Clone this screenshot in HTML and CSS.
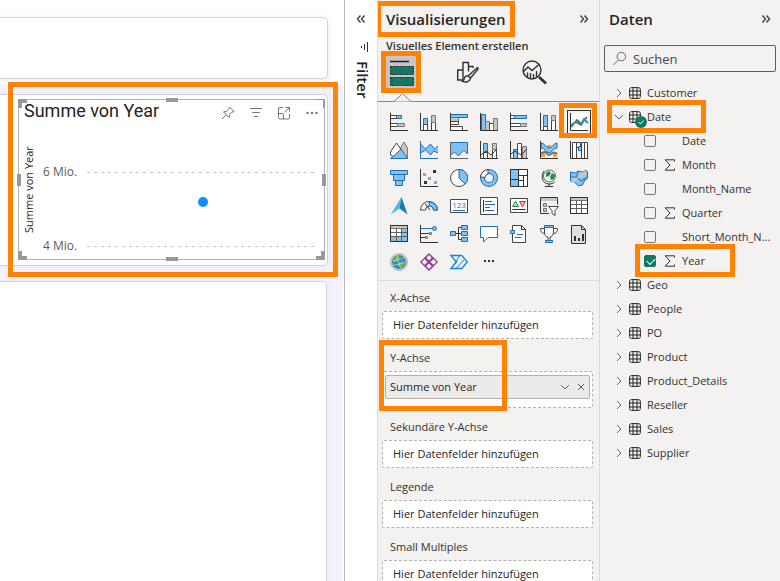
FILE: index.html
```html
<!DOCTYPE html>
<html lang="de">
<head>
<meta charset="utf-8">
<meta name="viewport" content="width=device-width, initial-scale=1">
<title>Berichtseditor</title>
<link rel="stylesheet" href="styles.css">
</head>
<body>
<svg class="defs" aria-hidden="true">
  <symbol id="table" viewBox="0 0 12 12"><rect x=".6" y=".6" width="10.8" height="10.8" rx="2"/><path d="M4 .6v10.8M8 .6v10.8M.6 4h10.8M.6 8h10.8"/></symbol>
  <symbol id="right" viewBox="0 0 12 12"><path d="M4 2l4 4-4 4"/></symbol>
  <symbol id="down" viewBox="0 0 12 12"><path d="M2 4l4 4 4-4"/></symbol>
  <symbol id="sigma" viewBox="0 0 12 12"><path d="M10.5 2.5V.8H1.200L6 6l-4.800 5.200h9.300V9.500"/></symbol>
</svg>
<div class="app">
  <main class="canvas">
    <div class="page-top"><div class="card"></div></div>
    <div class="page-body">
      <section class="card visual marked">
        <div class="frame"><i class="corner tl"></i><i class="corner tr"></i><i class="corner bl"></i><i class="corner br"></i><i class="grip t"></i><i class="grip b"></i><i class="grip l"></i><i class="grip r"></i></div>
        <header class="visual-head">
          <h1>Summe von Year</h1>
          <div class="visual-tools">
            <button aria-label="Anheften"><svg viewBox="0 0 14 14"><path d="M8.500 1l4.500 4.500-2 .7-2.400 2.400-.5 2.900-5.600-5.600 2.900-.5L7.800 3zM5.200 8.800L1 13"/></svg></button>
            <button aria-label="Filter"><svg viewBox="0 0 14 14"><path d="M1 2.500h12M3 6.500h8M5 10.500h4"/></svg></button>
            <button aria-label="Fokusmodus"><svg viewBox="0 0 14 14"><path d="M6 1.500H3a1.500 1.500 0 00-1.500 1.500v8.500A1.500 1.500 0 003 13h8a1.500 1.500 0 001.500-1.500V8M8.500 1.500h4v4M12.500 1.500L7.500 6.500M1.500 7.500H5A1.500 1.500 0 016.500 9v4"/></svg></button>
            <button aria-label="Weitere Optionen"><svg class="dots" viewBox="0 0 14 14"><circle cx="2.500" cy="7" r="1.200"/><circle cx="7" cy="7" r="1.200"/><circle cx="11.500" cy="7" r="1.200"/></svg></button>
          </div>
        </header>
        <div class="plot">
          <span class="axis-title">Summe von Year</span>
          <div class="lines">
            <div class="tick"><span>6 Mio.</span><i></i></div>
            <div class="tick"><span>4 Mio.</span><i></i></div>
            <b class="point"></b>
          </div>
        </div>
      </section>
      <div class="card tall"></div>
    </div>
  </main>

  <aside class="filter-pane">
    <button class="expand" aria-label="Filter erweitern"><svg viewBox="0 0 10 10"><path d="M4.500 1.500L1.500 5l3 3.500M8.500 1.500L5.500 5l3 3.500"/></svg></button>
    <svg class="filter-icon" viewBox="0 0 10 10"><path d="M8.500 0v10M5.500 2v6M2.500 4v2"/></svg>
    <h2>Filter</h2>
  </aside>

  <section class="viz-pane">
    <header class="pane-head">
      <h2 class="marked">Visualisierungen</h2>
      <button class="expand" aria-label="Reduzieren"><svg viewBox="0 0 10 10"><path d="M1.500 1.500l3 3.500-3 3.500M5.500 1.500l3 3.500-3 3.500"/></svg></button>
    </header>
    <h3>Visuelles Element erstellen</h3>
    <nav class="tabs">
      <button class="tab selected marked" aria-label="Visual erstellen"><svg viewBox="0 0 30 32"><path d="M4 5.500h19" stroke="#201f1e" stroke-width="1.500"/><g fill="#117865" stroke="#201f1e" stroke-dasharray="2 1"><rect x="4.500" y="10.500" width="23" height="8"/><rect x="4.500" y="21.500" width="23" height="8"/></g></svg></button>
      <button class="tab" aria-label="Visual formatieren"><svg viewBox="0 0 24 26" fill="none" stroke="#484644" stroke-width="1.400"><path d="M9 21H1.700V11H7V3.500h5.500v9M7 11v9M12.500 7.500H17V9"/><path d="M21.500 8.500c1 .6.500 1.500 0 2.200L14.500 19l-2.500-2zM12 17c-2.500-.4-3.500 1-3.800 3-.2 1.300-1 2-1.800 2.300 3 1.500 7.500.7 8.100-3.300z" fill="#f3f2f1"/></svg></button>
      <button class="tab" aria-label="Analyse"><svg viewBox="0 0 26 26" fill="none" stroke="#323130" stroke-width="1.400"><circle cx="11" cy="11" r="9"/><path d="M2 13l5-5 4 3.500L18.500 5M6.500 18v-4.500M9.500 19.500V14M12.500 19.500V15M15.500 18v-6"/><path d="M18 18l7 6.500" stroke-width="2.800"/></svg></button>
    </nav>
    <svg class="pointer" viewBox="0 0 17 9"><path d="M0 8.500L8.500.7 17 8.500"/></svg>

    <div class="gallery">
      <button aria-label="Gestapeltes Balkendiagramm"><svg viewBox="0 0 18 18"><path class="b" d="M6.500 2.500h5v3h-5z"/><path class="w" d="M.5 2.500h6v3h-6zM.5 10.500h7v3h-7z"/><path class="g" d="M7.500 10.500h7v3h-7z"/><path class="k" d="M.5 0v17.500H18"/></svg></button>
      <button aria-label="Gestapeltes Säulendiagramm"><svg viewBox="0 0 18 18"><path class="b" d="M3.500 5.500h4v6h-4z"/><path class="w" d="M3.500 11.500h4v6h-4zM11.500 9.500h4v8h-4z"/><path class="g" d="M11.500 2.500h4v7h-4z"/><path class="k" d="M.5 0v17.500H18"/></svg></button>
      <button aria-label="Gruppiertes Balkendiagramm"><svg viewBox="0 0 18 18"><path class="b" d="M.5 1.500h17v3H.5z"/><path class="g" d="M.5 4.500h8v4h-8z"/><path class="w" d="M.5 8.500h8v3h-8zM.5 13.500h12v4H.5z"/><path class="k" d="M.5 0v17.500H18"/></svg></button>
      <button aria-label="Gruppiertes Säulendiagramm"><svg viewBox="0 0 18 18"><path class="b" d="M1.500 1.500h4v16h-4z"/><path class="g" d="M5.500 8.500h4v9h-4z"/><path class="w" d="M9.500 10.500h4v7h-4z"/><path class="g" d="M13.500 5.500h4v12h-4z"/><path class="k" d="M.5 0v17.500H18"/></svg></button>
      <button aria-label="100 % gestapelte Balken"><svg viewBox="0 0 18 18"><path class="w" d="M.5 2.500h5v3h-5zM.5 10.500h11v3H.5z"/><path class="b" d="M4.500 2.500h12v3h-12z"/><path class="g" d="M10.500 10.500h6v3h-6z"/><path class="k" d="M.5 0v17.500H18"/></svg></button>
      <button aria-label="100 % gestapelte Säulen"><svg viewBox="0 0 18 18"><path class="b" d="M3.500 2.500h4v11h-4z"/><path class="w" d="M3.500 13.500h4v4h-4zM11.500 7.500h4v10h-4z"/><path class="g" d="M11.500 2.500h4v5h-4z"/><path class="k" d="M.5 0v17.500H18"/></svg></button>
      <button class="marked selected" aria-label="Liniendiagramm"><svg viewBox="0 0 18 18"><path class="k" d="M.5 0v17.500H18"/><path class="n" d="M1 14l6-7 4 4 6-7" stroke="#605e5c" stroke-width="1.800"/><path class="n" d="M1 12l5-3 5 3 3-6 4 4" stroke="#2b88a8" stroke-width="1.800"/></svg></button>

      <button aria-label="Flächendiagramm"><svg viewBox="0 0 18 18"><path class="g" d="M7 13l7-12 3.500 6v10H7z"/><path class="w" d="M.5 14v-3L6.500 2l5.500 8-6 7z"/><path class="b" d="M.5 17.500L6 13l5-5 6.500 9.500z"/></svg></button>
      <button aria-label="Gestapelte Fläche"><svg viewBox="0 0 18 18"><path d="M.5 3l5 5 5-5 4 5 3.500-3v7l-4.500-2-3 4-5-5-5 3z" fill="#83c1f2"/><path class="s" d="M.5 3l5 5 5-5 4 5 3.500-3M.5 12l5-3 5 5 3-4 4.500 2"/><path class="s" d="M.5 0v17.500H18"/></svg></button>
      <button aria-label="100 % Fläche"><svg viewBox="0 0 18 18"><path class="b" d="M.5 1.500h17V13l-4-4-5 6-4-4-4 3z"/><path class="axis" d="M.5 1v16.500H18"/></svg></button>
      <button aria-label="Linien und gestapelte Säulen"><svg viewBox="0 0 18 18"><path class="b" d="M3.500 2.500h4v9h-4z"/><path class="w" d="M3.500 11.500h4v6h-4zM12.500 8.500h4v9h-4z"/><path class="g" d="M12.500 2.500h4v6h-4z"/><path class="k" d="M.5 0v17.500H18M1 14l5-4 5 4 6-6"/></svg></button>
      <button aria-label="Linien und gruppierte Säulen"><svg viewBox="0 0 18 18"><path class="b" d="M3.500 8.500h4v9h-4z"/><path class="w" d="M7.500 2.500h4v15h-4z"/><path class="g" d="M12.500 5.500h4v12h-4z"/><path class="k" d="M.5 0v17.500H18M1 13l4-3 6 4 6-6"/></svg></button>
      <button aria-label="Menüband"><svg viewBox="0 0 18 18"><path d="M1 11h4v5H1zM13 11h4v5h-4zM7 4h4v3H7z" fill="#efa04e"/><path class="b" d="M1 2c4 0 5 5 8 5s5-5 8-5v5c-4 0-5 5-8 5s-4-5-8-5z"/><path class="n" d="M1 13c5-5 6 1 8 1s4-5 8-1" stroke="#797775" stroke-width="2"/><path class="k" d="M.5 0v17.500H18"/></svg></button>
      <button aria-label="Wasserfall"><svg viewBox="0 0 18 18"><path class="w" d="M2.500 1.500h4v16h-4zM6.500 1.500h4v5h-4z"/><path class="b" d="M8.500 5.500h3v4h-3z"/><path class="w" d="M11.500 1.500h3v16h-3zM14.500 1.500h3v16h-3z"/><path class="k" d="M.5 0v17.500H18"/></svg></button>

      <button aria-label="Trichter"><svg viewBox="0 0 18 18"><path class="b" d="M.5 1.500h17v4H.5zM3.500 5.500h11v6h-11zM5.500 11.500h7v5h-7z"/></svg></button>
      <button aria-label="Punktdiagramm"><svg viewBox="0 0 18 18"><path class="k" d="M.5 0v17.500H18"/><path d="M13 1h3v3h-3zM4 12h3v3H4z" fill="#323130"/><path d="M3 4h3v3H3zM8 8h3v3H8zM14 12h3v3h-3z" fill="#7fa9cf"/></svg></button>
      <button aria-label="Kreisdiagramm"><svg viewBox="0 0 18 18"><circle class="w" cx="9" cy="9" r="8.500"/><path class="b" d="M9 .5a8.500 8.500 0 016 14.500L9 9z"/></svg></button>
      <button aria-label="Ringdiagramm"><svg viewBox="0 0 18 18"><circle class="n" cx="9" cy="9" r="6.500" stroke="#1b6fb5" stroke-width="5"/><circle class="n" cx="9" cy="9" r="6.500" stroke="#83c1f2" stroke-width="3"/><path class="w" d="M.5 8A8.500 8.500 0 018 .5v4.500A4 4 0 005 8.500z"/></svg></button>
      <button aria-label="Treemap"><svg viewBox="0 0 18 18"><path class="w" d="M.5 .5h17v17H.5z"/><path class="b" d="M.5 .5h8v17h-8z"/><path class="k" d="M.5 .5h17v17H.5zM8.500 .5v17M8.500 6.500h9M.5 10.500h8M13.500 6.500v11M8.500 11.500h5"/></svg></button>
      <button aria-label="Karte"><svg viewBox="0 0 18 18"><circle cx="9.500" cy="7" r="6" fill="#eef7ef" stroke="#605e5c"/><path d="M6 4l3-2 2 2-2 3-3 1zM12 4l3 2-1 4-3 1-1-3z" fill="#218a50"/><path class="k" d="M4 2C0 8 3 15 9 15c3 0 5-1 6-2.500M9 15v2.500M5 17.500h8"/></svg></button>
      <button aria-label="Flächenkartogramm"><svg viewBox="0 0 18 18"><path class="b" d="M.5 3l5 1 3-2 4 1 3-2 2 2v6l-3 3-2 4-4 1-4-4-4-1z"/><path d="M8 2l4 2 3-3 2 3-3 4-6 1zM1 8l5-1 1 5-5 2z" fill="#c8c6c4"/><path class="s" d="M.5 8h6l2-6M8 9l3 3 6-3"/></svg></button>

      <button aria-label="Azure Map"><svg viewBox="0 0 18 18"><path d="M11.500 0L.8 17.500l8.700-6z" fill="#4db8df"/><path d="M11.500 0L17.500 17.500l-8-6z" fill="#1878b9"/></svg></button>
      <button aria-label="Messgerät"><svg viewBox="0 0 18 18"><path class="w" d="M.5 13a8.500 8.500 0 0117 0h-4a4 4 0 00-8 0z"/><path class="b" d="M9 5a8 8 0 018.500 8h-4A4 4 0 009 9z"/><path class="k" d="M10 13L5 6.500"/></svg></button>
      <button aria-label="Karte mit Wert"><svg viewBox="0 0 18 18"><path class="w" d="M.5 2.500h17v13H.5z"/><text x="9" y="11">123</text><path class="s" d="M3 13.500h12"/></svg></button>
      <button aria-label="Mehrzeilige Karte"><svg viewBox="0 0 18 18"><path class="w" d="M.5 .5h17v17H.5z"/><path class="k" d="M3.500 3v12"/><path class="s" d="M5 4.500h7M5 7.500h10M5 10.500h5M5 13.500h9"/></svg></button>
      <button aria-label="KPI"><svg viewBox="0 0 18 18"><path class="w" d="M.5 1.500h17v14H.5z"/><path d="M2.500 9.500L5.500 4l3 5.500z" fill="#a9dbc0" stroke="#278653"/><path d="M9.500 4.500h6l-3 5.500z" fill="#f1aaa9" stroke="#cf3535"/><path class="k" d="M2.500 12.500h13"/></svg></button>
      <button aria-label="Datenschnitt"><svg viewBox="0 0 18 18"><path class="k" d="M9 16.500H.5V.5h17v7"/><path d="M1 1h16v3H1z" fill="#c8c6c4"/><path class="g" d="M3.500 6.500h3v3h-3zM3.500 11.500h3v3h-3z"/><path class="w" d="M8.500 9.500h10l-3.500 4v5l-3-2v-3z"/></svg></button>
      <button aria-label="Tabelle"><svg viewBox="0 0 18 18"><path class="w" d="M.5 .5h17v16H.5z"/><path class="g" d="M.5 .5h17v3H.5z"/><path class="axis" d="M6.500 3.500v13M11.500 3.500v13M.5 7.500h17M.5 11.500h17"/><path class="k" d="M.5 .5h17v16H.5z"/></svg></button>

      <button aria-label="Matrix"><svg viewBox="0 0 18 18"><path class="w" d="M.5 .5h17v16H.5z"/><path d="M12 4h5v12h-5zM7 12h5v4H7zM1 12h6v4H1z" fill="#83c1f2"/><path class="g" d="M.5 .5h17v3H.5z"/><path class="axis" d="M6.500 3.500v13M11.500 3.500v13M.5 7.500h17M.5 11.500h17"/><path class="k" d="M.5 .5h17v16H.5z"/></svg></button>
      <button aria-label="R-Visual"><svg viewBox="0 0 18 18"><path class="k" d="M.5 0v17.500H18M1 8.500h9M1 12.500h6"/><path class="s" d="M1 3.500h12"/><circle class="b" cx="14.500" cy="3.500" r="2"/><path class="g" d="M9.500 7.500h2v2h-2zM5.500 11.500h2v2h-2z"/></svg></button>
      <button aria-label="Analysebaum"><svg viewBox="0 0 18 18"><path class="k" d="M6 8.500h6M8.500 2.500v12h3M8.500 2.500h3"/><path class="b" d="M.5 6.500h5v4h-5zM11.500 .5h6v4h-6zM11.500 6.500h6v4h-6zM11.500 12.500h6v4h-6z"/></svg></button>
      <button aria-label="Q&amp;A"><svg viewBox="0 0 18 18"><path d="M.5 1.500h17v11H8L3.500 17v-4.500h-3z" fill="#fff" stroke="#1b6fb5"/></svg></button>
      <button aria-label="Narrativ"><svg viewBox="0 0 18 18"><path class="w" d="M2.500 .5h9l4 4v13h-13z"/><path class="k" d="M11.500 .5v4h4"/><path class="b" d="M.5 5.500h4v3h-4z"/><path class="s" d="M7 9.500h6M5 12.500h6"/></svg></button>
      <button aria-label="Ziele"><svg viewBox="0 0 18 18"><path class="w" d="M4.500 1.500h9V7c0 3-2 5-3.500 5v4H8v-4C6 12 4.500 10 4.500 7zM4.500 3.500h-4C.5 7 2 8.500 5 8.500M13.500 3.500h4c0 3.500-1.500 5-4.500 5"/><path class="b" d="M4.500 .5h9v2h-9zM5.500 15.500h7v2h-7z"/></svg></button>
      <button aria-label="Paginierter Bericht"><svg viewBox="0 0 18 18"><path d="M1.500 .5h10l4 4v14h-14z" fill="#e1dfdd" stroke="#323130"/><path class="k" d="M11.500 .5v4h4"/><path d="M4 11h2v5H4zM8 13h2v3H8zM12 9h2v7h-2z" fill="#323130"/></svg></button>

      <button aria-label="ArcGIS"><svg viewBox="0 0 18 18"><circle cx="9" cy="9" r="8.500" fill="#d2d0ce" stroke="#b3b0ad"/><circle class="globe" cx="9" cy="9" r="7" fill="#2f88bd"/><path d="M4 5l4-3 3 2-2 3-4 2-2 3zM9 9l4-1 2 3-4 4-3-2z" fill="#65b457"/><path class="n" d="M3 8c4-1 8-1 12-4M3 12c4 0 8-1 12-3M7 2c0 5 2 10 4 13" stroke="#d9eef2" stroke-width=".6"/></svg></button>
      <button aria-label="Power Apps"><svg viewBox="0 0 18 18"><path class="n" d="M9 .8L17.200 9 9 17.200.8 9zM9 1l3.500 3.800L9 8.500 5.500 4.800zM9 9.500l3.500 3.700L9 17l-3.500-3.800zM4.800 5.500L8.500 9l-3.700 3.500M13.200 5.500L9.500 9l3.700 3.500" stroke="#8b3a92" stroke-width="1.200"/></svg></button>
      <button aria-label="Power Automate"><svg viewBox="0 0 18 18"><path d="M.8 2.500h11L17.300 9l-5.500 6.500H.8L6.500 9z" fill="#e8f3fb" stroke="#1683d8" stroke-width="1.300"/><path class="n" d="M9.500 3L3 13.500M14 7l-7.500 8" stroke="#1683d8"/></svg></button>
      <button aria-label="Weitere Visuals"><svg viewBox="0 0 18 18"><path d="M4 7h2v2H4zM8 7h2v2H8zM12 7h2v2h-2z" fill="#323130"/></svg></button>
    </div>

    <div class="wells">
      <section class="well"><h4>X-Achse</h4><div class="drop">Hier Datenfelder hinzufügen</div></section>
      <section class="well marked y-axis"><h4>Y-Achse</h4><div class="drop filled"><div class="chip"><span>Summe von Year</span><button aria-label="Menü"><svg><use href="#down"/></svg></button><button aria-label="Entfernen"><svg viewBox="0 0 12 12"><path d="M3 3l6 6M9 3l-6 6"/></svg></button></div></div></section>
      <section class="well"><h4>Sekundäre Y-Achse</h4><div class="drop">Hier Datenfelder hinzufügen</div></section>
      <section class="well"><h4>Legende</h4><div class="drop">Hier Datenfelder hinzufügen</div></section>
      <section class="well"><h4>Small Multiples</h4><div class="drop">Hier Datenfelder hinzufügen</div></section>
    </div>
  </section>

  <aside class="data-pane">
    <header class="pane-head">
      <h2>Daten</h2>
      <button class="expand" aria-label="Reduzieren"><svg viewBox="0 0 10 10"><path d="M1.500 1.500l3 3.500-3 3.500M5.500 1.500l3 3.500-3 3.500"/></svg></button>
    </header>
    <label class="search"><svg viewBox="0 0 16 16"><circle cx="10" cy="6" r="4.500"/><path d="M7 9.500L1.500 15"/></svg><input type="text" placeholder="Suchen" aria-label="Suchen"></label>
    <ul class="tree">
      <li class="row"><svg class="chev"><use href="#right"/></svg><svg class="tbl"><use href="#table"/></svg><span>Customer</span></li>
      <li class="row marked date-row"><svg class="chev"><use href="#down"/></svg><span class="badged"><svg class="tbl"><use href="#table"/></svg><svg class="badge" viewBox="0 0 12 12"><circle cx="6" cy="6" r="6"/><path d="M3.500 6l2 2 3-3.500"/></svg></span><span>Date</span></li>
      <li><label class="row field"><input type="checkbox"><i class="kind"></i><span>Date</span></label></li>
      <li><label class="row field"><input type="checkbox"><svg class="kind"><use href="#sigma"/></svg><span>Month</span></label></li>
      <li><label class="row field"><input type="checkbox"><i class="kind"></i><span>Month_Name</span></label></li>
      <li><label class="row field"><input type="checkbox"><svg class="kind"><use href="#sigma"/></svg><span>Quarter</span></label></li>
      <li><label class="row field"><input type="checkbox"><i class="kind"></i><span>Short_Month_N...</span></label></li>
      <li><label class="row field marked year-row"><input type="checkbox" checked><svg class="kind"><use href="#sigma"/></svg><span>Year</span></label></li>
      <li class="row"><svg class="chev"><use href="#right"/></svg><svg class="tbl"><use href="#table"/></svg><span>Geo</span></li>
      <li class="row"><svg class="chev"><use href="#right"/></svg><svg class="tbl"><use href="#table"/></svg><span>People</span></li>
      <li class="row"><svg class="chev"><use href="#right"/></svg><svg class="tbl"><use href="#table"/></svg><span>PO</span></li>
      <li class="row"><svg class="chev"><use href="#right"/></svg><svg class="tbl"><use href="#table"/></svg><span>Product</span></li>
      <li class="row"><svg class="chev"><use href="#right"/></svg><svg class="tbl"><use href="#table"/></svg><span>Product_Details</span></li>
      <li class="row"><svg class="chev"><use href="#right"/></svg><svg class="tbl"><use href="#table"/></svg><span>Reseller</span></li>
      <li class="row"><svg class="chev"><use href="#right"/></svg><svg class="tbl"><use href="#table"/></svg><span>Sales</span></li>
      <li class="row"><svg class="chev"><use href="#right"/></svg><svg class="tbl"><use href="#table"/></svg><span>Supplier</span></li>
    </ul>
  </aside>
</div>
</body>
</html>
```
FILE: styles.css
```css
* { box-sizing: border-box; }
body, h1, h2, h3, h4, ul { margin: 0; padding: 0; }
body { font: 11px/16px "Open Sans", "Noto Sans", sans-serif; color: #323130; background: #fff; }
button { padding: 0; border: 0; background: none; font: inherit; color: inherit; display: flex; }
svg { display: block; fill: none; stroke: #323130; overflow: visible; }
.defs { position: absolute; width: 0; height: 0; }
h2 { font-size: 15px; line-height: 20px; font-weight: 600; color: #252423; }

.app { display: grid; grid-template-columns: minmax(0, 1fr) 32px 223px 180px; height: 100vh; overflow: hidden; }

/* orange call-out frame */
.marked { position: relative; }
.marked::after { content: ""; position: absolute; inset: -5px; border: 5px solid #ff8205; z-index: 3; pointer-events: none; }

/* report canvas */
.canvas { display: flex; flex-direction: column; border-right: 1px solid #b9b9b9; overflow: hidden; }
.page-top { height: 85px; padding: 17px 16px 0 0; }
.page-body { flex: 1; display: flex; flex-direction: column; gap: 15px; margin-right: 1px; padding: 9px 15px 0 0; background: #f3f1fc; }
.card { height: 62px; margin-left: -8px; border: 1px solid #d3d0e3; border-radius: 5px; background: #fff; box-shadow: 1px 1px 6px #ece9fa; }
.card.tall { height: auto; flex: 1; margin-bottom: -8px; margin-right: 1px; }
.card.visual { height: 172px; padding: 5px 3px 5px 26px; }
.visual::after { inset: -13px -11px -12px 15px; }
.frame { position: absolute; inset: 4px 2px 5px 25px; border: 1px solid #b3b0ad; }
.corner, .grip { position: absolute; background: #999; }
.corner { width: 9px; height: 9px; background: none; border: 0 solid #999; }
.tl { top: -1px; left: -1px; border-width: 4px 0 0 4px; }
.tr { top: -1px; right: -1px; border-width: 1px 2px 0 0; }
.bl { bottom: -1px; left: -1px; border-width: 0 0 4px 4px; }
.br { bottom: -1px; right: -1px; border-width: 0 4px 4px 0; }
.grip.t, .grip.b { width: 12px; height: 4px; left: calc(50% - 6px); }
.grip.t { top: -2px; }
.grip.b { bottom: -2px; }
.grip.l, .grip.r { width: 4px; height: 12px; top: calc(50% - 6px); }
.grip.l { left: -2px; }
.grip.r { right: -2px; }
.visual-head { display: flex; justify-content: space-between; padding: 0 5px; }
.visual-head h1 { font: 400 18px/22px Roboto, sans-serif; color: #252423; }
.visual-tools { display: flex; align-items: center; gap: 14px; padding-top: 4px; }
.visual-tools svg { width: 14px; height: 14px; stroke: #797775; }
.visual-tools .dots { fill: #797775; stroke: none; }
.plot { display: flex; height: 138px; }
.axis-title { writing-mode: vertical-rl; transform: rotate(180deg); padding-bottom: 24px; margin: 0 0 0 2px; text-align: right; color: #252423; }
.lines { position: relative; flex: 1; display: flex; flex-direction: column; gap: 58px; padding: 42px 6px 0 6px; }
.tick { display: flex; align-items: center; gap: 10px; font-size: 12px; color: #605e5c; }
.tick i { flex: 1; height: 1px; background: repeating-linear-gradient(90deg, #c8c6c4 0 3px, transparent 3px 7px); }
.point { position: absolute; left: 56%; top: 75px; width: 10px; height: 10px; border-radius: 50%; background: #118dff; }

/* collapsed filter pane */
.filter-pane { display: flex; flex-direction: column; align-items: center; padding-top: 14px; background: #fff; }
.expand svg { width: 10px; height: 10px; stroke: #484644; stroke-width: 1.5; }
.filter-icon { width: 10px; height: 10px; margin: 18px 0 9px 6px; }
.filter-pane h2 { writing-mode: vertical-rl; margin-left: 3px; }

/* visualizations */
.viz-pane { background: #f3f2f1; border: 0 solid #dddbd9; border-width: 0 1px; overflow: hidden; }
.pane-head { display: flex; align-items: center; justify-content: space-between; height: 38px; padding: 0 10px 0 8px; }
.pane-head h2.marked::after { inset: -8px -9px -8px -10px; }
.viz-pane h3 { padding-left: 8px; font-size: 11px; line-height: 16px; font-weight: 600; }
.tabs { display: flex; gap: 38px; padding: 2px 0 0 8px; height: 40px; }
.tab { width: 28px; height: 32px; align-items: center; justify-content: center; }
.tab svg { width: 26px; height: 26px; }
.tab.selected { width: 30px; background: #c8c6c4; }
.tab.selected svg { width: 30px; height: 32px; }
.pointer { width: 17px; height: 9px; margin: -1px 0 0 16px; stroke: #8a8886; fill: #f3f2f1; position: relative; z-index: 1; }
.gallery { display: grid; grid-template-columns: repeat(7, 18px); grid-auto-rows: 18px; gap: 10px 12px; margin-top: -1px; padding: 11px 0 9px 12px; border: 0 solid #8a8886; border-top-width: 1px; border-bottom: 1px solid #dddbd9; }
.gallery svg { width: 18px; height: 18px; }
.gallery .selected { outline: 1px solid #323130; outline-offset: 2px; background: #fff; }
.gallery .marked::after { inset: -10px -9px -7px -11px; }
.gallery .b { fill: #83c1f2; stroke: #1b6fb5; }
.gallery .g { fill: #c8c6c4; stroke: #797775; }
.gallery .w { fill: #fff; stroke: #484644; }
.gallery .k { fill: none; stroke: #323130; }
.gallery .s { fill: none; stroke: #1b6fb5; }
.gallery .n { fill: none; }
.gallery .axis { fill: none; stroke: #605e5c; }
.gallery .globe, .gallery path[fill]:not([stroke]) { stroke: none; }
.gallery text { font: 8px "Open Sans", sans-serif; text-anchor: middle; fill: #1b6fb5; stroke: none; }

.wells { padding: 1px 6px 0 4px; }
.well h4 { padding: 8px 0 5px 8px; font-size: 11px; line-height: 16px; font-weight: 400; }
.drop { height: 28px; padding: 5px 10px; border: 1px dashed #b3b0ad; border-radius: 2px; background: #fff; color: #252423; }
.well + .well h4 { padding-top: 11px; }
.drop.filled { height: 37px; padding: 3px 2px; }
.chip { display: flex; align-items: center; gap: 4px; height: 24px; padding: 0 2px 0 4px; border: 1px solid #b3b0ad; border-radius: 2px; background: #edebe9; }
.chip span { flex: 1; }
.chip svg { width: 12px; height: 12px; stroke: #605e5c; }
.y-axis::after { inset: 1px 86px -3px -3px; }

/* data */
.data-pane { background: #f3f2f1; padding: 0 4px; overflow: hidden; }
.data-pane .pane-head { padding: 0 5px; }
.search { display: flex; align-items: center; gap: 6px; height: 27px; margin-top: 7px; padding: 0 7px; border: 1px solid #605e5c; border-radius: 2px; }
.search svg { width: 15px; height: 15px; stroke: #605e5c; flex: none; }
.search input { flex: 1; min-width: 0; border: 0; padding: 0; background: none; font: 13px/18px "Open Sans", sans-serif; color: #323130; outline: 0; }
.search input::placeholder { color: #484644; opacity: 1; }
.tree { list-style: none; padding-top: 9px; }
.row { display: flex; align-items: center; height: 24px; padding-left: 9px; white-space: nowrap; }
.chev { width: 12px; height: 12px; margin-right: 4px; stroke: #605e5c; }
.tbl { width: 12px; height: 12px; margin-right: 6px; stroke: #252423; }
.badged { position: relative; }
.badge { position: absolute; left: 6px; top: 5px; width: 12px; height: 12px; fill: #117865; stroke: none; }
.badge path { fill: none; stroke: #fff; }
.field { padding-left: 40px; }
.field input { appearance: none; width: 12px; height: 12px; margin: 0 8px 0 0; border: 1px solid #797775; border-radius: 2px; }
.field input:checked { border-color: #117865; background: #117865; position: relative; }
.field input:checked::after { content: ""; position: absolute; left: 2px; top: 2px; width: 7px; height: 4px; border: solid #fff; border-width: 0 0 1px 1px; transform: rotate(-45deg); }
.kind { width: 12px; height: 12px; margin-right: 6px; }
.date-row::after { inset: -5px 70px -4px 3px; }
.year-row::after { inset: -5px 41px -4px 31px; }
```
